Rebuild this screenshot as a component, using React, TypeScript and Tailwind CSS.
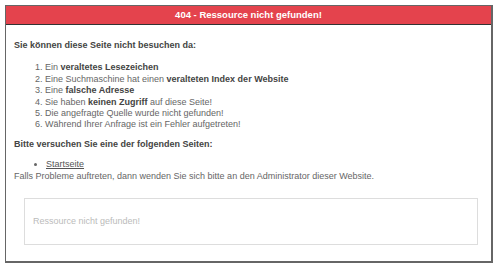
export default function App() {
  const items: React.ReactNode[] = [
    <>Ein <b className="text-[#444]">veraltetes Lesezeichen</b></>,
    <>Eine Suchmaschine hat einen <b className="text-[#444]">veralteten Index der Website</b></>,
    <>Eine <b className="text-[#444]">falsche Adresse</b></>,
    <>Sie haben <b className="text-[#444]">keinen Zugriff</b> auf diese Seite!</>,
    <>Die angefragte Quelle wurde nicht gefunden!</>,
    <>Während Ihrer Anfrage ist ein Fehler aufgetreten!</>,
  ];

  return (
    <div className="h-[270px] w-[500px] bg-white pl-[5px] pt-[5px] font-['Liberation_Sans',Arial,sans-serif] text-[9px] text-[#666]">
      <div className="flex h-[258px] w-[488px] flex-col border border-b-2 border-r-2 border-[#666]">
        <div className="flex h-[19px] items-center justify-center border-b border-[#333] bg-[#e4434d] text-[9.5px] font-bold text-white">
          404 - Ressource nicht gefunden!
        </div>
        <div className="px-[8px] leading-[11.4px]">
          <p className="mt-[15px] font-bold text-[#444]">
            Sie können diese Seite nicht besuchen da:
          </p>
          <ol className="mt-[11px] list-decimal pl-[31px] marker:text-[#666]">
            {items.map((it, i) => (
              <li key={i}>{it}</li>
            ))}
          </ol>
          <p className="mt-[8px] font-bold text-[#444]">
            Bitte versuchen Sie eine der folgenden Seiten:
          </p>
          <ul className="mt-[9px] list-disc pl-[32px]">
            <li>
              <a href="#" className="text-[#555] underline">
                Startseite
              </a>
            </li>
          </ul>
          <p className="mt-[0px]">
            Falls Probleme auftreten, dann wenden Sie sich bitte an den
            Administrator dieser Website.
          </p>
          <div className="ml-[10px] mt-[16px] flex h-[47px] w-[454px] items-center border border-[#ddd] pl-[8px] text-[#bbb]">
            Ressource nicht gefunden!
          </div>
        </div>
      </div>
    </div>
  );
}
